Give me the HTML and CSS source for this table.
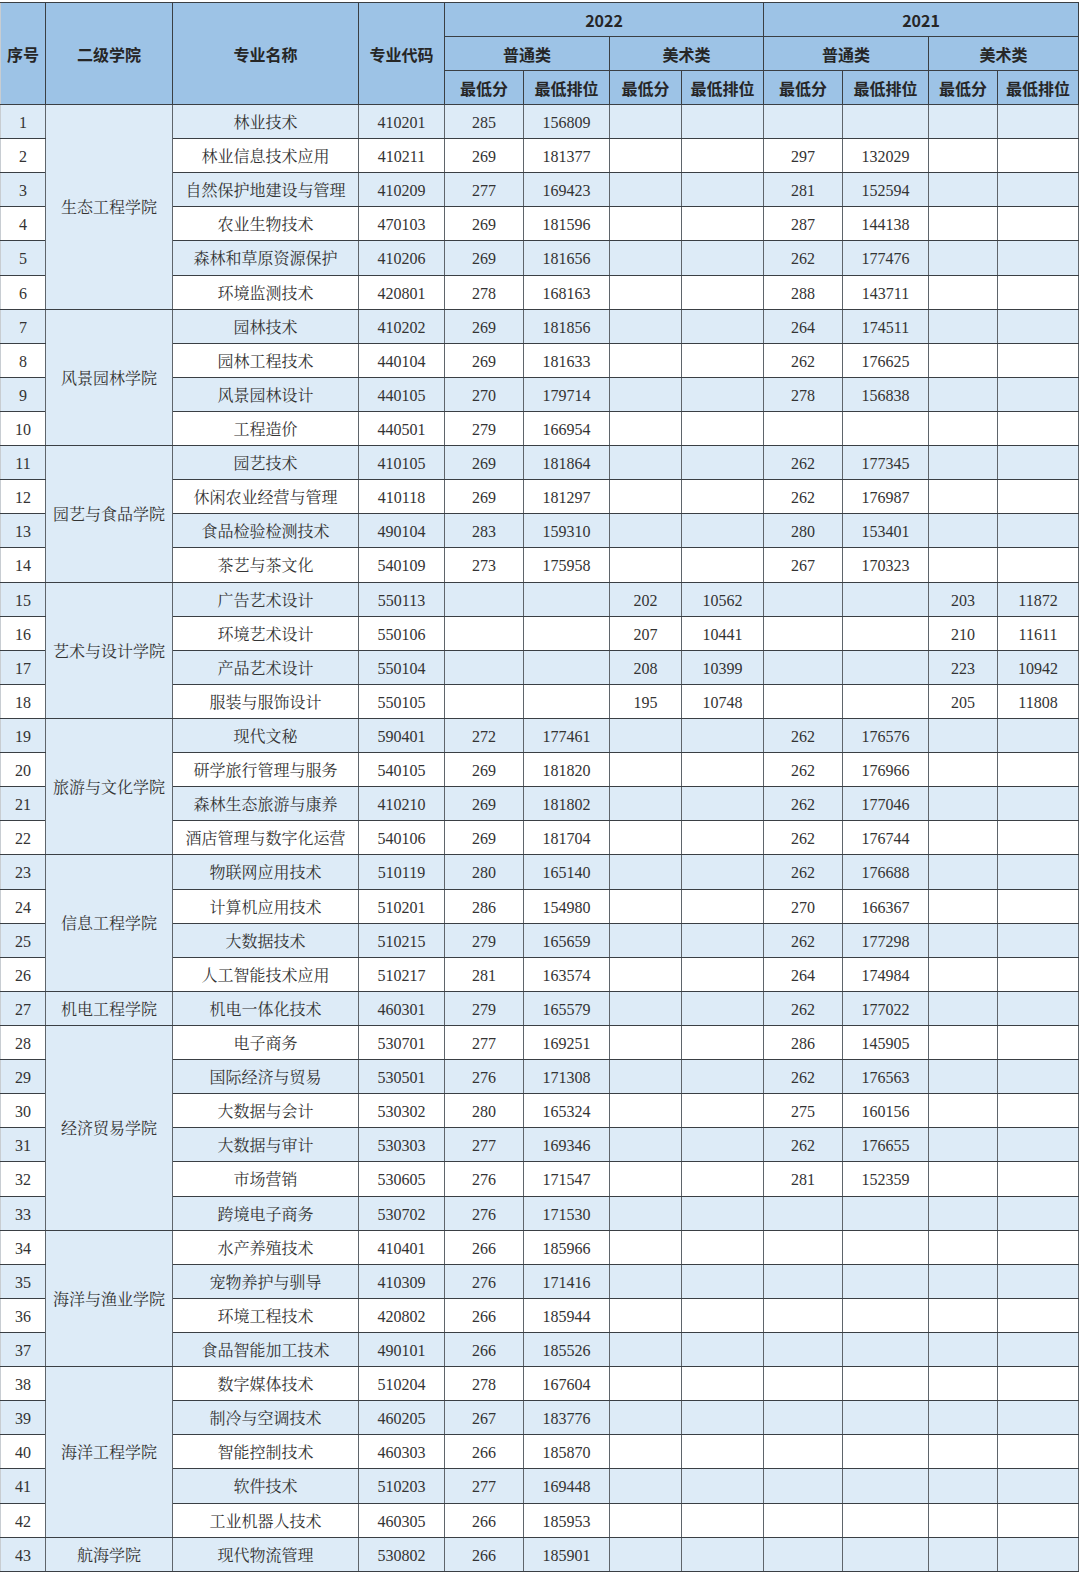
FILE: index.html
```html
<!DOCTYPE html>
<html lang="zh-CN">
<head>
<meta charset="utf-8">
<title>录取分数</title>
<link rel="stylesheet" href="styles.css">
</head>
<body>
<div class="wrap">
<table class="score">
<colgroup>
<col class="c1"><col class="c2"><col class="c3"><col class="c4">
<col class="c5"><col class="c6"><col class="c7"><col class="c8">
<col class="c9"><col class="c10"><col class="c11"><col class="c12">
</colgroup>
<thead>
<tr class="h"><th rowspan="3">序号</th><th rowspan="3">二级学院</th><th rowspan="3">专业名称</th><th rowspan="3">专业代码</th><th colspan="4">2022</th><th colspan="4">2021</th></tr>
<tr class="h"><th colspan="2">普通类</th><th colspan="2">美术类</th><th colspan="2">普通类</th><th colspan="2">美术类</th></tr>
<tr class="h"><th>最低分</th><th>最低排位</th><th>最低分</th><th>最低排位</th><th>最低分</th><th>最低排位</th><th>最低分</th><th>最低排位</th></tr>
</thead>
<tbody>
<tr class="odd"><td>1</td><td class="col" rowspan="6">生态工程学院</td><td>林业技术</td><td>410201</td><td>285</td><td>156809</td><td></td><td></td><td></td><td></td><td></td><td></td></tr>
<tr class="even"><td>2</td><td>林业信息技术应用</td><td>410211</td><td>269</td><td>181377</td><td></td><td></td><td>297</td><td>132029</td><td></td><td></td></tr>
<tr class="odd"><td>3</td><td>自然保护地建设与管理</td><td>410209</td><td>277</td><td>169423</td><td></td><td></td><td>281</td><td>152594</td><td></td><td></td></tr>
<tr class="even"><td>4</td><td>农业生物技术</td><td>470103</td><td>269</td><td>181596</td><td></td><td></td><td>287</td><td>144138</td><td></td><td></td></tr>
<tr class="odd tall"><td>5</td><td>森林和草原资源保护</td><td>410206</td><td>269</td><td>181656</td><td></td><td></td><td>262</td><td>177476</td><td></td><td></td></tr>
<tr class="even"><td>6</td><td>环境监测技术</td><td>420801</td><td>278</td><td>168163</td><td></td><td></td><td>288</td><td>143711</td><td></td><td></td></tr>
<tr class="odd"><td>7</td><td class="col" rowspan="4">风景园林学院</td><td>园林技术</td><td>410202</td><td>269</td><td>181856</td><td></td><td></td><td>264</td><td>174511</td><td></td><td></td></tr>
<tr class="even"><td>8</td><td>园林工程技术</td><td>440104</td><td>269</td><td>181633</td><td></td><td></td><td>262</td><td>176625</td><td></td><td></td></tr>
<tr class="odd"><td>9</td><td>风景园林设计</td><td>440105</td><td>270</td><td>179714</td><td></td><td></td><td>278</td><td>156838</td><td></td><td></td></tr>
<tr class="even"><td>10</td><td>工程造价</td><td>440501</td><td>279</td><td>166954</td><td></td><td></td><td></td><td></td><td></td><td></td></tr>
<tr class="odd"><td>11</td><td class="col" rowspan="4">园艺与食品学院</td><td>园艺技术</td><td>410105</td><td>269</td><td>181864</td><td></td><td></td><td>262</td><td>177345</td><td></td><td></td></tr>
<tr class="even"><td>12</td><td>休闲农业经营与管理</td><td>410118</td><td>269</td><td>181297</td><td></td><td></td><td>262</td><td>176987</td><td></td><td></td></tr>
<tr class="odd"><td>13</td><td>食品检验检测技术</td><td>490104</td><td>283</td><td>159310</td><td></td><td></td><td>280</td><td>153401</td><td></td><td></td></tr>
<tr class="even tall"><td>14</td><td>茶艺与茶文化</td><td>540109</td><td>273</td><td>175958</td><td></td><td></td><td>267</td><td>170323</td><td></td><td></td></tr>
<tr class="odd"><td>15</td><td class="col" rowspan="4">艺术与设计学院</td><td>广告艺术设计</td><td>550113</td><td></td><td></td><td>202</td><td>10562</td><td></td><td></td><td>203</td><td>11872</td></tr>
<tr class="even"><td>16</td><td>环境艺术设计</td><td>550106</td><td></td><td></td><td>207</td><td>10441</td><td></td><td></td><td>210</td><td>11611</td></tr>
<tr class="odd"><td>17</td><td>产品艺术设计</td><td>550104</td><td></td><td></td><td>208</td><td>10399</td><td></td><td></td><td>223</td><td>10942</td></tr>
<tr class="even"><td>18</td><td>服装与服饰设计</td><td>550105</td><td></td><td></td><td>195</td><td>10748</td><td></td><td></td><td>205</td><td>11808</td></tr>
<tr class="odd"><td>19</td><td class="col" rowspan="4">旅游与文化学院</td><td>现代文秘</td><td>590401</td><td>272</td><td>177461</td><td></td><td></td><td>262</td><td>176576</td><td></td><td></td></tr>
<tr class="even"><td>20</td><td>研学旅行管理与服务</td><td>540105</td><td>269</td><td>181820</td><td></td><td></td><td>262</td><td>176966</td><td></td><td></td></tr>
<tr class="odd"><td>21</td><td>森林生态旅游与康养</td><td>410210</td><td>269</td><td>181802</td><td></td><td></td><td>262</td><td>177046</td><td></td><td></td></tr>
<tr class="even"><td>22</td><td>酒店管理与数字化运营</td><td>540106</td><td>269</td><td>181704</td><td></td><td></td><td>262</td><td>176744</td><td></td><td></td></tr>
<tr class="odd tall"><td>23</td><td class="col" rowspan="4">信息工程学院</td><td>物联网应用技术</td><td>510119</td><td>280</td><td>165140</td><td></td><td></td><td>262</td><td>176688</td><td></td><td></td></tr>
<tr class="even"><td>24</td><td>计算机应用技术</td><td>510201</td><td>286</td><td>154980</td><td></td><td></td><td>270</td><td>166367</td><td></td><td></td></tr>
<tr class="odd"><td>25</td><td>大数据技术</td><td>510215</td><td>279</td><td>165659</td><td></td><td></td><td>262</td><td>177298</td><td></td><td></td></tr>
<tr class="even"><td>26</td><td>人工智能技术应用</td><td>510217</td><td>281</td><td>163574</td><td></td><td></td><td>264</td><td>174984</td><td></td><td></td></tr>
<tr class="odd"><td>27</td><td class="col">机电工程学院</td><td>机电一体化技术</td><td>460301</td><td>279</td><td>165579</td><td></td><td></td><td>262</td><td>177022</td><td></td><td></td></tr>
<tr class="even"><td>28</td><td class="col" rowspan="6">经济贸易学院</td><td>电子商务</td><td>530701</td><td>277</td><td>169251</td><td></td><td></td><td>286</td><td>145905</td><td></td><td></td></tr>
<tr class="odd"><td>29</td><td>国际经济与贸易</td><td>530501</td><td>276</td><td>171308</td><td></td><td></td><td>262</td><td>176563</td><td></td><td></td></tr>
<tr class="even"><td>30</td><td>大数据与会计</td><td>530302</td><td>280</td><td>165324</td><td></td><td></td><td>275</td><td>160156</td><td></td><td></td></tr>
<tr class="odd"><td>31</td><td>大数据与审计</td><td>530303</td><td>277</td><td>169346</td><td></td><td></td><td>262</td><td>176655</td><td></td><td></td></tr>
<tr class="even tall"><td>32</td><td>市场营销</td><td>530605</td><td>276</td><td>171547</td><td></td><td></td><td>281</td><td>152359</td><td></td><td></td></tr>
<tr class="odd"><td>33</td><td>跨境电子商务</td><td>530702</td><td>276</td><td>171530</td><td></td><td></td><td></td><td></td><td></td><td></td></tr>
<tr class="even"><td>34</td><td class="col" rowspan="4">海洋与渔业学院</td><td>水产养殖技术</td><td>410401</td><td>266</td><td>185966</td><td></td><td></td><td></td><td></td><td></td><td></td></tr>
<tr class="odd"><td>35</td><td>宠物养护与驯导</td><td>410309</td><td>276</td><td>171416</td><td></td><td></td><td></td><td></td><td></td><td></td></tr>
<tr class="even"><td>36</td><td>环境工程技术</td><td>420802</td><td>266</td><td>185944</td><td></td><td></td><td></td><td></td><td></td><td></td></tr>
<tr class="odd"><td>37</td><td>食品智能加工技术</td><td>490101</td><td>266</td><td>185526</td><td></td><td></td><td></td><td></td><td></td><td></td></tr>
<tr class="even"><td>38</td><td class="col" rowspan="5">海洋工程学院</td><td>数字媒体技术</td><td>510204</td><td>278</td><td>167604</td><td></td><td></td><td></td><td></td><td></td><td></td></tr>
<tr class="odd"><td>39</td><td>制冷与空调技术</td><td>460205</td><td>267</td><td>183776</td><td></td><td></td><td></td><td></td><td></td><td></td></tr>
<tr class="even"><td>40</td><td>智能控制技术</td><td>460303</td><td>266</td><td>185870</td><td></td><td></td><td></td><td></td><td></td><td></td></tr>
<tr class="odd tall"><td>41</td><td>软件技术</td><td>510203</td><td>277</td><td>169448</td><td></td><td></td><td></td><td></td><td></td><td></td></tr>
<tr class="even"><td>42</td><td>工业机器人技术</td><td>460305</td><td>266</td><td>185953</td><td></td><td></td><td></td><td></td><td></td><td></td></tr>
<tr class="odd"><td>43</td><td class="col">航海学院</td><td>现代物流管理</td><td>530802</td><td>266</td><td>185901</td><td></td><td></td><td></td><td></td><td></td><td></td></tr>
</tbody>
</table>
</div>
</body>
</html>
```
FILE: styles.css
```css
html, body {
  margin: 0;
  padding: 0;
  background: #ffffff;
}
.wrap {
  padding-top: 2px;
}
.score {
  border-collapse: collapse;
  table-layout: fixed;
  width: 1078px;
  font-family: "Liberation Serif", "Noto Serif CJK SC", "Noto Sans CJK SC", serif;
  font-size: 16px;
  color: #333333;
  border-top: 1px solid #2e3338;
  border-right: 1px solid #2e3338;
  border-bottom: 1px solid #2e3338;
  border-left: 1px solid #c8cdd2;
}
.c1 { width: 45px; }
.c2 { width: 127px; }
.c3 { width: 186px; }
.c4 { width: 86px; }
.c5 { width: 79px; }
.c6 { width: 86px; }
.c7 { width: 72px; }
.c8 { width: 82px; }
.c9 { width: 79px; }
.c10 { width: 86px; }
.c11 { width: 69px; }
.c12 { width: 81px; }
.score th, .score td {
  border-top: 1px solid #3a3f44;
  border-bottom: 1px solid #3a3f44;
  border-left: 1px solid #5f656b;
  border-right: 1px solid #5f656b;
  padding: 0;
  text-align: center;
  vertical-align: middle;
  white-space: nowrap;
  overflow: hidden;
  line-height: 20px;
}
.score td {
  padding-top: 2px;
}
.score th {
  border-left-color: #3a3f44;
  border-right-color: #3a3f44;
}
.score th:first-child, .score td:first-child {
  border-left-color: #c8cdd2;
}
.score tr.h {
  height: 34px;
}
.score th {
  background: #9dc3e6;
  font-family: "Noto Sans CJK SC", "Liberation Sans", sans-serif;
  font-weight: 700;
  color: #262626;
  font-size: 16px;
}
.score tbody tr {
  height: 34px;
}
.score tbody tr.tall {
  height: 35px;
}
.score tr.odd td {
  background: #ddebf7;
}
.score tr.even td {
  background: #ffffff;
}
.score td.col,
.score tr.even td.col {
  background: #ddebf7;
}
```
